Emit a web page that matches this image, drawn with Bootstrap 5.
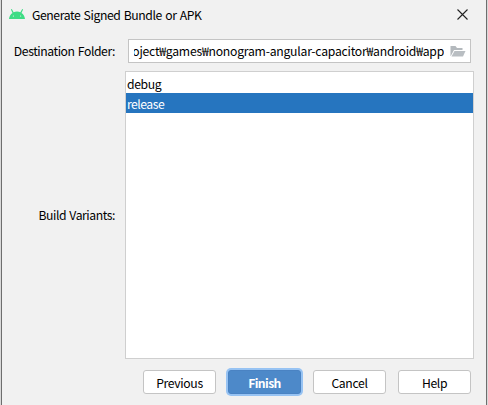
<!DOCTYPE html>
<html lang="en">
<head>
<meta charset="utf-8">
<title>Generate Signed Bundle or APK</title>
<link href="https://cdn.jsdelivr.net/npm/bootstrap@5.3.0/dist/css/bootstrap.min.css" rel="stylesheet">
<style>
body{width:488px;height:405px;background:#d9d9d9;font:12.2px/20px "Noto Sans CJK KR","Noto Sans",sans-serif;color:#000}
.dialog{width:486px;height:405px;margin-left:1px;background:#f1f1f1;border-left:1px solid #6e6e6e;border-right:1px solid #6e6e6e}
.titlebar{height:39px;padding:5px 18px 0 7px}
.titlebar .t-text{margin-left:7px;letter-spacing:-.41px;word-spacing:1px}
.robot{margin-top:4px}
.close-x{margin-top:4px}
.folder-row{height:24px}
.lbl{width:113px;text-align:right;flex:none;letter-spacing:-.43px;word-spacing:1px}
.path{width:343px;height:24px;margin-left:13px;border:1px solid #c4c4c4;background:#fff;padding:0 4px 0 5px}
.clip{width:310px;height:22px;line-height:23px;letter-spacing:-.23px}
.list-row{height:288px;margin-top:8px}
.variants{width:349px;height:288px;margin-left:10px;border:1px solid #cfcfcf;background:#fff;padding-top:1px}
.variants .list-group-item{height:20px;padding:0 0 0 1px;border:0;border-radius:0;background:none;color:#000;line-height:23px;letter-spacing:-.35px}
.variants .list-group-item.active{background:#2675bf;color:#fff;margin:0;letter-spacing:-.5px}
.actions{padding:11px 15px 0 141px}
.btn-dlg{width:73px;height:24px;padding:0;font-size:12.2px;line-height:24px;background:#fff;border:1px solid #c4c4c4;border-radius:3px;color:#000;letter-spacing:-.35px}
.btn-dlg.main{background:#4d89c9;border-color:#4a83c3;color:#fff;font-weight:700;letter-spacing:-.6px;box-shadow:0 0 0 2px #97c3f3}
</style>
<script src="https://cdn.jsdelivr.net/npm/bootstrap@5.3.0/dist/js/bootstrap.bundle.min.js"></script>
</head>
<body class="overflow-hidden">
<main class="dialog">
  <header class="titlebar d-flex align-items-start">
    <svg class="robot" width="16" height="10" viewBox="0 0 16 10"><path d="M0 10C.2 7.3 1.6 5 3.5 3.9L1.9.5 2.8 0 4.6 3.2C6.6 2.1 9.4 2.1 11.4 3.2L13.2 0l.9.5-1.6 3.4C14.4 5 15.8 7.3 16 10Z" fill="#3ddc84"/><circle cx="4.4" cy="7" r=".6" fill="#f1f1f1"/><circle cx="11.6" cy="7" r=".6" fill="#f1f1f1"/></svg>
    <span class="t-text text-nowrap">Generate Signed Bundle or APK</span>
    <svg class="close-x ms-auto" width="11" height="11" viewBox="0 0 11 11"><path d="M.5.5l10 10M10.5.5l-10 10" stroke="#222" stroke-width="1.1"/></svg>
  </header>
  <div class="folder-row d-flex align-items-center">
    <label class="lbl">Destination Folder:</label>
    <div class="path d-flex align-items-center justify-content-between">
      <div class="clip overflow-hidden d-flex justify-content-end text-nowrap"><span>oject₩games₩nonogram-angular-capacitor₩android₩app</span></div>
      <svg width="16" height="12" viewBox="0 0 16 12"><path d="M.5 11V1h5L7 3h5.500v2H4L.8 11Z" fill="#b4b9bd"/><path d="M4.500 6H15.500L13 11.500H1.500Z" fill="#b9bec2"/></svg>
    </div>
  </div>
  <div class="list-row d-flex align-items-center">
    <label class="lbl">Build Variants:</label>
    <div class="variants list-group rounded-0">
      <div class="list-group-item">debug</div>
      <div class="list-group-item active">release</div>
    </div>
  </div>
  <footer class="actions d-flex justify-content-between">
    <button class="btn btn-dlg">Previous</button>
    <button class="btn btn-dlg main">Finish</button>
    <button class="btn btn-dlg">Cancel</button>
    <button class="btn btn-dlg">Help</button>
  </footer>
</main>
</body>
</html>
